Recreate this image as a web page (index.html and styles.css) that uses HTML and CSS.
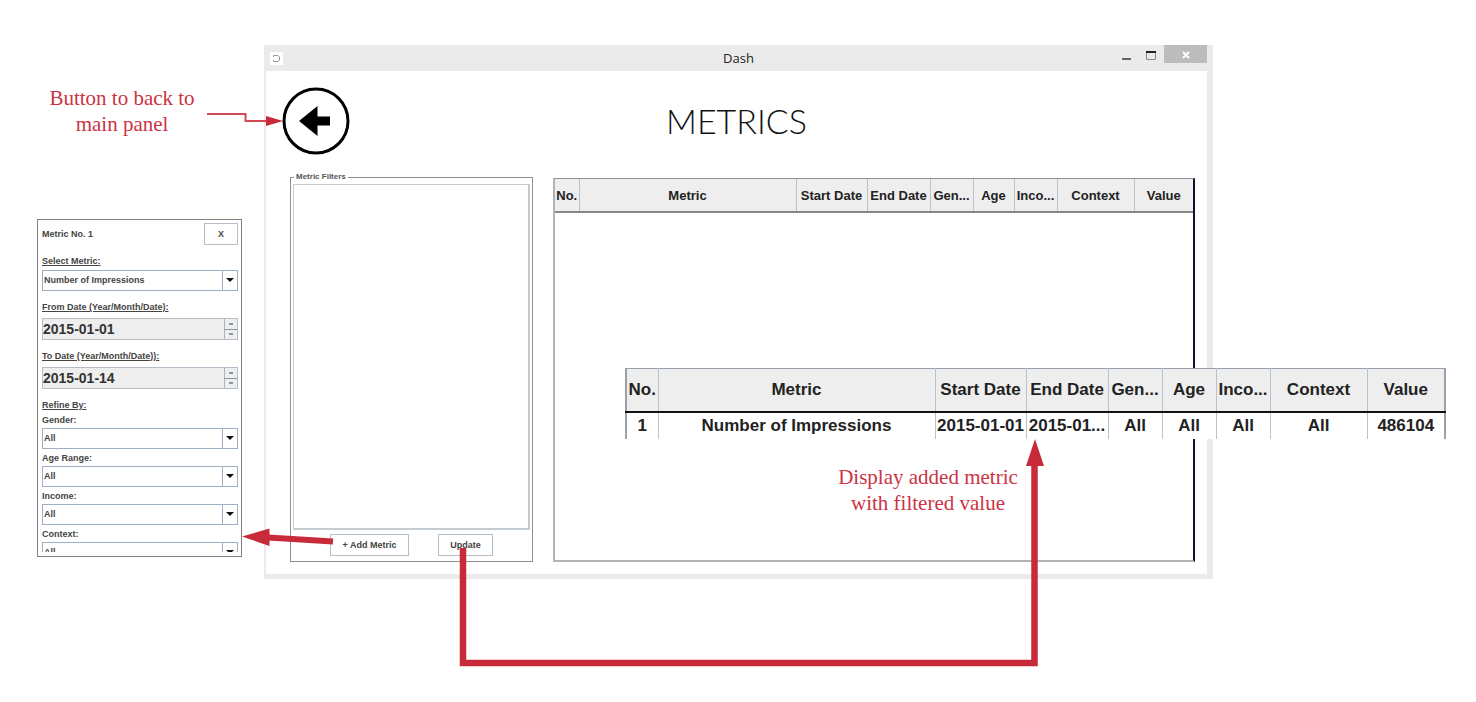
FILE: index.html
```html
<!DOCTYPE html>
<html lang="en">
<head>
<meta charset="utf-8">
<title>Dash - Metrics</title>
<link rel="stylesheet" href="styles.css">
</head>
<body>
<main class="stage">
  <div class="side">
    <p class="note side-note">Button to back to<br>main panel</p>
    <form class="editor">
      <div class="editor-head">
        <span>Metric No. 1</span>
        <button type="button" class="btn btn-close">X</button>
      </div>
      <div class="field">
        <label class="underlined" for="metric">Select Metric:</label>
        <div class="combo"><select id="metric"><option>Number of Impressions</option></select></div>
      </div>
      <div class="field field-date">
        <label class="underlined" for="from">From Date (Year/Month/Date):</label>
        <div class="spinner">
          <input id="from" type="text" value="2015-01-01">
          <div class="steps"><button type="button" aria-label="Next day"></button><button type="button" aria-label="Previous day"></button></div>
        </div>
      </div>
      <div class="field field-date">
        <label class="underlined" for="to">To Date (Year/Month/Date)):</label>
        <div class="spinner">
          <input id="to" type="text" value="2015-01-14">
          <div class="steps"><button type="button" aria-label="Next day"></button><button type="button" aria-label="Previous day"></button></div>
        </div>
      </div>
      <div class="refine">
        <span class="underlined">Refine By:</span>
        <div class="field field-tight">
          <label for="gender">Gender:</label>
          <div class="combo"><select id="gender"><option>All</option></select></div>
        </div>
        <div class="field field-tight">
          <label for="age">Age Range:</label>
          <div class="combo"><select id="age"><option>All</option></select></div>
        </div>
        <div class="field field-tight">
          <label for="income">Income:</label>
          <div class="combo"><select id="income"><option>All</option></select></div>
        </div>
        <div class="field field-tight">
          <label for="context">Context:</label>
          <div class="cutoff"><div class="combo"><select id="context"><option>All</option></select></div></div>
        </div>
      </div>
    </form>
  </div>

  <section class="window">
    <header class="titlebar">
      <svg class="app-icon" viewBox="0 0 13 13"><rect width="13" height="13" fill="#fff"/><path d="M3.500 5V3.500h4.500L9.500 5v3L8 9.500H3.500V8" fill="none" stroke="#999"/></svg>
      <span class="window-title">Dash</span>
      <div class="window-buttons">
        <button type="button" aria-label="Minimize"><svg viewBox="0 0 12 14"><path d="M2 12h9" stroke="#666" stroke-width="2"/></svg></button>
        <button type="button" aria-label="Maximize"><svg viewBox="0 0 12 14"><path d="M1.500 5v7.500h9V5" fill="none" stroke="#888"/><path d="M1 5h10" stroke="#222" stroke-width="2"/></svg></button>
        <button type="button" class="quit" aria-label="Close"><svg viewBox="0 0 12 14"><path d="M3 5l6 6M9 5l-6 6" stroke="#fff" stroke-width="2"/></svg></button>
      </div>
    </header>
    <div class="page-head">
      <button type="button" class="back" aria-label="Back"><svg viewBox="0 0 68 68"><circle cx="34" cy="34" r="32" fill="none" stroke="#000" stroke-width="3"/><path d="M17 34L35.500 19v10.500H48v9H35.500V49z"/></svg></button>
      <h1>METRICS</h1>
    </div>
    <div class="panels">
      <fieldset class="filters">
        <legend>Metric Filters</legend>
        <div class="filter-list"></div>
        <div class="actions">
          <button type="button" class="btn btn-add">+ Add Metric</button>
          <button type="button" class="btn btn-update">Update</button>
        </div>
      </fieldset>
      <div class="results">
        <table class="grid grid-small">
          <colgroup><col class="c-no"><col><col class="c-start"><col class="c-end"><col class="c-gender"><col class="c-age"><col class="c-income"><col class="c-context"><col class="c-value"></colgroup>
          <thead><tr><th>No.</th><th>Metric</th><th>Start Date</th><th>End Date</th><th>Gen...</th><th>Age</th><th>Inco...</th><th>Context</th><th>Value</th></tr></thead>
        </table>
      </div>
    </div>
  </section>

  <div class="callout">
    <table class="grid grid-large">
      <colgroup><col class="c-no"><col><col class="c-start"><col class="c-end"><col class="c-gender"><col class="c-age"><col class="c-income"><col class="c-context"><col class="c-value"></colgroup>
      <thead><tr><th>No.</th><th>Metric</th><th>Start Date</th><th>End Date</th><th>Gen...</th><th>Age</th><th>Inco...</th><th>Context</th><th>Value</th></tr></thead>
      <tbody><tr><td>1</td><td>Number of Impressions</td><td>2015-01-01</td><td>2015-01...</td><td>All</td><td>All</td><td>All</td><td>All</td><td>486104</td></tr></tbody>
    </table>
    <p class="note callout-note">Display added metric<br>with filtered value</p>
  </div>

  <svg class="arrows" viewBox="0 0 1476 702" preserveAspectRatio="none" aria-hidden="true">
    <g fill="none" stroke="#c92a39">
      <path d="M207 114h38.500v7H267" stroke-width="2" stroke="#d04a55"/>
      <path d="M333 541.500L268 537.500" stroke-width="6"/>
      <path d="M463 548v115h571.500V465" stroke-width="6.500"/>
    </g>
    <g fill="#c92a39">
      <path d="M283 121l-17-5v10z"/>
      <path d="M242 536.500l27.500-8v17.500z"/>
      <path d="M1035 439l-9 27h18z"/>
    </g>
  </svg>
</main>
</body>
</html>
```
FILE: styles.css
```css
* { box-sizing: border-box; }

body {
  margin: 0;
  background: #fff;
  color: #222;
  font-family: "Liberation Sans", Arial, sans-serif;
}

button, input, select { font: inherit; color: inherit; }
p, h1 { margin: 0; }

.stage {
  position: relative;
  display: grid;
  grid-template-columns: 205px 1fr;
  column-gap: 22px;
  align-items: start;
  min-height: 100vh;
  padding: 45px 263px 45px 37px;
}

.note {
  color: #cc3344;
  font: 21px/26px "Liberation Serif", "Times New Roman", serif;
  text-align: center;
}

/* Metric editor */
.side {
  display: flex;
  flex-direction: column;
  gap: 82px;
  padding-top: 40px;
}
.side-note { width: 170px; }

.editor {
  display: flex;
  flex-direction: column;
  gap: 10px;
  padding: 3px 3px 4px 4px;
  border: 1px solid #808080;
  font-size: 9px;
  font-weight: bold;
  line-height: 12px;
  color: #444;
}
.editor-head {
  display: flex;
  justify-content: space-between;
  align-items: center;
}
.underlined { text-decoration: underline; }

.btn {
  height: 22px;
  padding: 0;
  background: #fff;
  border: 1px solid #b4bec8;
  font-size: 9px;
  font-weight: bold;
  color: #444;
}
.btn-close { width: 34px; }

.field { display: flex; flex-direction: column; gap: 3px; }
.field-date { gap: 5px; }
.field-tight { gap: 2px; }
.refine { display: flex; flex-direction: column; gap: 3px; }
.cutoff { height: 10px; overflow: hidden; }

.combo { position: relative; height: 21px; }
.combo select {
  width: 100%;
  height: 100%;
  padding: 0 0 2px 1px;
  appearance: none;
  background: #fff;
  border: 1px solid #9fb0c4;
  border-radius: 0;
}
.combo::before {
  content: "";
  position: absolute;
  inset: 0 15px 0 auto;
  border-left: 1px solid #9fb0c4;
}
.combo::after {
  content: "";
  position: absolute;
  top: 8px;
  right: 4px;
  border: 4px solid transparent;
  border-top-color: #111;
  border-bottom: 0;
}

.spinner {
  display: flex;
  height: 22px;
  background: #eee;
  border: 1px solid #b4bec8;
}
.spinner input {
  flex: 1;
  min-width: 0;
  padding: 0;
  background: none;
  border: 0;
  font-size: 14px;
  color: #333;
}
.steps { display: flex; flex-direction: column; width: 13px; }
.steps button {
  display: grid;
  place-items: center;
  flex: 1;
  min-height: 0;
  padding: 0;
  background: #eee;
  border: 0;
  border-left: 1px solid #a8b4c0;
}
.steps button + button { border-top: 1px solid #8494a4; }
.steps button::before {
  content: "";
  width: 4px;
  height: 2px;
  background: #8896a4;
}

/* Application window */
.window {
  border: solid #ebebeb;
  border-width: 0 6px 5px 2px;
  background: #fff;
}
.titlebar {
  display: grid;
  grid-template-columns: 1fr auto 1fr;
  align-items: center;
  height: 26px;
  padding-left: 4px;
  background: #ebebeb;
}
.app-icon { width: 13px; height: 13px; }
.window-title { font: 13px/18px "Open Sans", "Noto Sans", sans-serif; }
.window-buttons {
  display: flex;
  justify-self: end;
  align-self: start;
  gap: 13px;
}
.window-buttons button {
  height: 18px;
  padding: 0;
  background: none;
  border: 0;
}
.window-buttons svg { display: block; width: 12px; height: 14px; margin: 0 auto; }
.window-buttons .quit { width: 43px; margin-left: -6px; background: #bcbcbc; }

.page-head {
  display: grid;
  grid-template-columns: 1fr auto 1fr;
  align-items: center;
  padding: 16px 16px 0;
}
.back {
  width: 68px;
  height: 68px;
  padding: 0;
  background: none;
  border: 0;
}
.back svg { display: block; }
h1 { font: 300 34px/40px Lato, sans-serif; color: #111; }

.panels {
  display: grid;
  grid-template-columns: 243px 1fr;
  column-gap: 20px;
  padding: 16px 12px 12px 24px;
}
.filters {
  min-width: 0;
  margin: 0;
  padding: 1px 2px 5px;
  border: 1px solid #909090;
}
.filters legend {
  margin-left: 1px;
  padding: 0 2px;
  font-size: 8px;
  font-weight: bold;
  line-height: 12px;
  color: #555;
}
.filter-list {
  height: 346px;
  border: 1px solid #c4ccd2;
  border-width: 1px 2px 2px 1px;
}
.actions {
  display: flex;
  justify-content: center;
  gap: 29px;
  padding-top: 4px;
}
.btn-add { width: 79px; }
.btn-update { width: 55px; }

.results {
  margin-top: 7px;
  border: solid #b0b4b8;
  border-width: 1px 2px 2px;
  border-top-color: #8c949c;
  border-right-color: #101030;
}

/* Metric tables */
.grid {
  width: 100%;
  table-layout: fixed;
  border-collapse: collapse;
  font-weight: bold;
  white-space: nowrap;
}
.grid th, .grid td { padding: 0; text-align: center; }
.grid th { background: #eee; }
.grid th + th, .grid td + td { border-left: 1px solid #b8c2cc; }

.grid-small { font-size: 13px; }
.grid-small th { height: 33px; border-bottom: 2px solid #888; }
.grid-small .c-no { width: 24px; }
.grid-small .c-start { width: 71px; }
.grid-small .c-end { width: 63px; }
.grid-small .c-gender, .grid-small .c-income { width: 43px; }
.grid-small .c-age { width: 41px; }
.grid-small .c-context { width: 77px; }
.grid-small .c-value { width: 59px; }

.callout {
  position: absolute;
  top: 368px;
  left: 625px;
  right: 30px;
}
.grid-large {
  background: #fff;
  border: solid #98a2ac;
  border-width: 1px 2px 0;
  font-size: 17px;
}
.grid-large th { height: 43px; border-bottom: 2px solid #111; }
.grid-large td { height: 27px; }
.grid-large .c-no { width: 32px; }
.grid-large .c-start { width: 91px; }
.grid-large .c-end { width: 82px; }
.grid-large .c-gender, .grid-large .c-age, .grid-large .c-income { width: 54px; }
.grid-large .c-context { width: 97px; }
.grid-large .c-value { width: 78px; }
.callout-note { width: 606px; margin-top: 25px; }

.arrows {
  position: absolute;
  top: 0;
  left: 0;
  width: 100%;
  height: 702px;
  pointer-events: none;
}
```
